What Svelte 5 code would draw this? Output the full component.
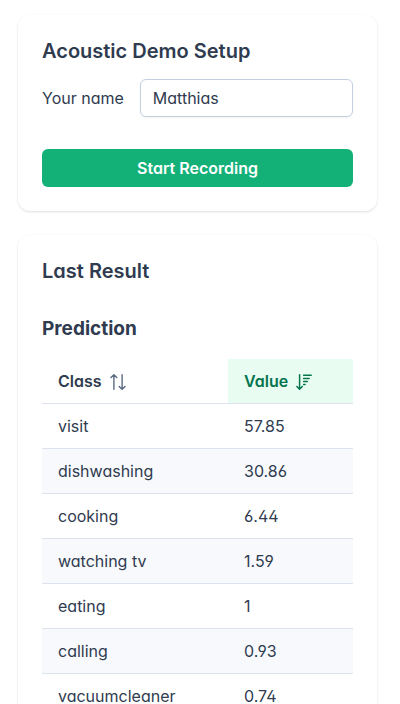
<script>
  let name = $state('Matthias');

  const rows = [
    { label: 'visit', value: 57.85 },
    { label: 'dishwashing', value: 30.86 },
    { label: 'cooking', value: 6.44 },
    { label: 'watching tv', value: 1.59 },
    { label: 'eating', value: 1 },
    { label: 'calling', value: 0.93 },
    { label: 'vacuumcleaner', value: 0.74 }
  ];
</script>

<main>
  <section class="card">
    <h2>Acoustic Demo Setup</h2>
    <form onsubmit={(e) => e.preventDefault()}>
      <div class="field">
        <label for="name">Your name</label>
        <input id="name" type="text" bind:value={name} />
      </div>
      <button class="record" type="submit">Start Recording</button>
    </form>
  </section>

  <section class="card">
    <h2>Last Result</h2>
    <h3>Prediction</h3>
    <table>
      <thead>
        <tr>
          <th aria-sort="none">
            <button class="sort">
              Class
              <svg width="16" height="16" viewBox="0 0 16 16" fill="none" stroke="currentColor" stroke-width="1.4" stroke-linecap="round" stroke-linejoin="round" aria-hidden="true">
                <path class="muted" d="M3.9 15.3V.8M1 3.6 3.9.7l2.9 2.9M12.1.7v14.5M9.2 12.4l2.9 2.9 2.9-2.9" />
              </svg>
            </button>
          </th>
          <th class="sorted" aria-sort="descending">
            <button class="sort">
              Value
              <svg width="16" height="16" viewBox="0 0 16 16" fill="none" stroke="currentColor" stroke-width="1.5" stroke-linecap="round" stroke-linejoin="round" aria-hidden="true">
                <path d="M3.6.8v14.3M.9 12.5l2.7 2.7 2.7-2.7M7.6 1.3h7.6M7.6 4.4h5.6M7.6 7.5h3.7M7.6 10.6h1.5" />
              </svg>
            </button>
          </th>
        </tr>
      </thead>
      <tbody>
        {#each rows as row}
          <tr>
            <td>{row.label}</td>
            <td>{row.value}</td>
          </tr>
        {/each}
      </tbody>
    </table>
  </section>
</main>

<style>
  :global(body) {
    background: #fff;
  }

  main {
    display: flex;
    flex-direction: column;
    gap: 24px;
    padding: 15px 23px 24px 18px;
    color: #2f3b4f;
    font-family: Inter, "Liberation Sans", sans-serif;
    font-size: 16px;
    line-height: 20px;
    font-feature-settings: "cv02", "cv03", "cv04", "cv11";
  }

  .card {
    padding: 24px;
    border-radius: 12px;
    background: #fff;
    box-shadow: 0 1px 3px rgba(0, 0, 0, 0.1), 0 1px 2px -1px rgba(0, 0, 0, 0.1);
  }

  h2,
  h3 {
    margin: 0;
    line-height: 24px;
  }

  h2 {
    font-size: 20px;
    font-weight: 600;
  }

  h3 {
    margin: 34px 0 18px;
    font-size: 19px;
    font-weight: 700;
  }

  form {
    display: flex;
    flex-direction: column;
    gap: 32px;
    margin-top: 16px;
  }

  .field {
    display: flex;
    align-items: center;
    gap: 16px;
  }

  label {
    flex: none;
  }

  input,
  button {
    box-sizing: border-box;
    color: inherit;
    font: inherit;
    font-feature-settings: inherit;
  }

  input {
    flex: 1;
    min-width: 0;
    height: 38px;
    padding: 8px 12px;
    border: 1px solid #c3d0e0;
    border-radius: 6px;
    background: #fff;
    box-shadow: 0 1px 2px rgba(18, 18, 23, 0.05);
  }

  .record {
    height: 38px;
    padding: 8px 12px;
    border: 0;
    border-radius: 6px;
    background: #13b078;
    color: #fff;
    font-weight: 600;
  }

  table {
    width: 100%;
    border-collapse: separate;
    border-spacing: 0;
  }

  th,
  td {
    padding: 12px 16px;
    border-bottom: 1px solid #dce3ee;
    text-align: left;
  }

  .sorted {
    box-sizing: border-box;
    width: 125px;
    background: #e8fcf2;
    color: #04744f;
  }

  .sort {
    display: flex;
    align-items: center;
    gap: 8px;
    padding: 0;
    border: 0;
    background: none;
    font-weight: 600;
  }

  .sort svg {
    position: relative;
    top: 1px;
  }

  .muted {
    color: #5b6b82;
  }

  tbody tr:nth-child(even) {
    background: #f7f9fd;
  }
</style>
